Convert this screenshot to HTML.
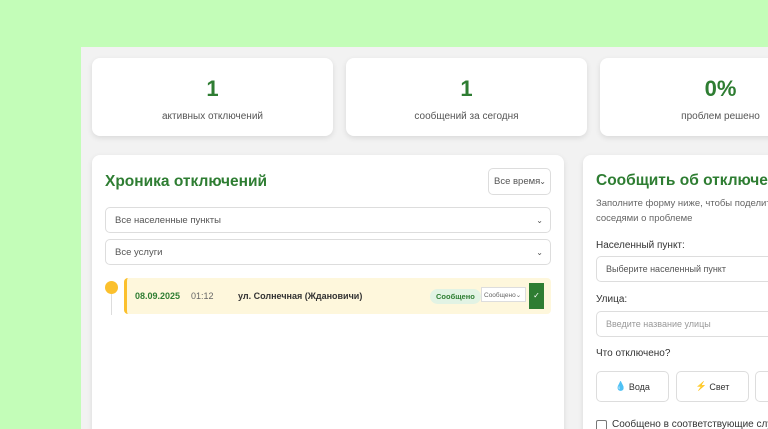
<!DOCTYPE html>
<html><head><meta charset="utf-8"><style>
*{box-sizing:border-box;margin:0;padding:0}
html,body{width:768px;height:429px;overflow:hidden}
body{background:#c3fdb8;font-family:"Liberation Sans",sans-serif;position:relative}
.main{position:absolute;left:81px;top:47px;width:700px;height:400px;background:#f2f2f2}
.card{position:absolute;background:#fff;border-radius:8px;box-shadow:0 2px 6px rgba(0,0,0,.1)}
.stat{top:58px;height:78px;width:241px;text-align:center}
.stat b{display:block;margin-top:18px;font-size:22px;color:#2e7d32}
.stat span{display:block;margin-top:9px;font-size:10px;color:#555}
.h{font-weight:bold;color:#2e7d32;font-size:15.5px;position:absolute}
.sel{position:absolute;border:1px solid #ddd;border-radius:5px;font-size:9.5px;color:#555;padding-left:9px;display:flex;align-items:center;background:#fff}
.sel i{position:absolute;right:7px;font-style:normal;font-size:8px}
.lbl{position:absolute;font-size:10px;color:#333}
</style></head><body>
<div class="main"></div>
<div class="card stat" style="left:92px"><b>1</b><span>активных отключений</span></div>
<div class="card stat" style="left:346px"><b>1</b><span>сообщений за сегодня</span></div>
<div class="card stat" style="left:600px"><b>0%</b><span>проблем решено</span></div>

<div class="card" style="left:92px;top:155px;width:472px;height:290px">
 <div class="h" style="left:13px;top:18px">Хроника отключений</div>
 <div class="sel" style="left:396px;top:13px;width:63px;height:27px;padding-left:5px">Все время<i style="right:4px">⌄</i></div>
 <div class="sel" style="left:13px;top:52px;width:446px;height:26px">Все населенные пункты<i>⌄</i></div>
 <div class="sel" style="left:13px;top:84px;width:446px;height:26px">Все услуги<i>⌄</i></div>
 <div style="position:absolute;left:19px;top:133px;width:1px;height:27px;background:#ddd"></div>
 <div style="position:absolute;left:13px;top:126px;width:13px;height:13px;border-radius:50%;background:#fbc02d"></div>
 <div style="position:absolute;left:32px;top:123px;width:427px;height:36px;background:#fef7dc;border-left:3px solid #fbc02d;border-radius:4px;font-size:9px">
  <span style="position:absolute;left:8px;top:13px;color:#2e7d32;font-weight:bold">08.09.2025</span>
  <span style="position:absolute;left:64px;top:13px;color:#666">01:12</span>
  <span style="position:absolute;left:111px;top:13px;color:#333;font-weight:bold">ул. Солнечная (Ждановичи)</span>
  <span style="position:absolute;left:303px;top:11px;background:#e2f3e4;color:#2e7d32;font-weight:bold;font-size:7.5px;padding:3px 6px;border-radius:8px">Сообщено</span>
  <span style="position:absolute;left:354px;top:9px;width:45px;height:15px;border:1px solid #ddd;background:#fff;font-size:6.5px;color:#666;padding:3px 2px">Сообщено⌄</span>
  <span style="position:absolute;left:402px;top:5px;width:15px;height:26px;background:#2e7d32;color:#fff;font-size:8px;text-align:center;line-height:26px">✓</span>
 </div>
</div>

<div class="card" style="left:583px;top:155px;width:200px;height:290px">
 <div class="h" style="left:13px;top:17px;white-space:nowrap">Сообщить об отключении</div>
 <div style="position:absolute;left:13px;top:41px;font-size:9.5px;color:#666;line-height:15px;white-space:nowrap">Заполните форму ниже, чтобы поделиться<br>соседями о проблеме</div>
 <div class="lbl" style="left:13px;top:85px">Населенный пункт:</div>
 <div class="sel" style="left:13px;top:101px;width:200px;height:26px;font-size:9px">Выберите населенный пункт</div>
 <div class="lbl" style="left:13px;top:139px">Улица:</div>
 <div class="sel" style="left:13px;top:156px;width:200px;height:26px;font-size:9px;color:#999">Введите название улицы</div>
 <div class="lbl" style="left:13px;top:193px">Что отключено?</div>
 <div class="sel" style="left:13px;top:216px;width:73px;height:31px;justify-content:center;padding:0;font-size:9px;color:#333"><span style="color:#42a5f5">💧</span>&nbsp;Вода</div>
 <div class="sel" style="left:93px;top:216px;width:73px;height:31px;justify-content:center;padding:0;font-size:9px;color:#333"><span style="color:#ff7043">⚡</span>&nbsp;Свет</div>
 <div class="sel" style="left:172px;top:216px;width:73px;height:31px"></div>
 <div style="position:absolute;left:13px;top:265px;width:11px;height:11px;border:1px solid #777;border-radius:2px"></div>
 <div style="position:absolute;left:29px;top:264px;font-size:10px;color:#333;white-space:nowrap">Сообщено в соответствующие службы</div>
</div>
</body></html>
